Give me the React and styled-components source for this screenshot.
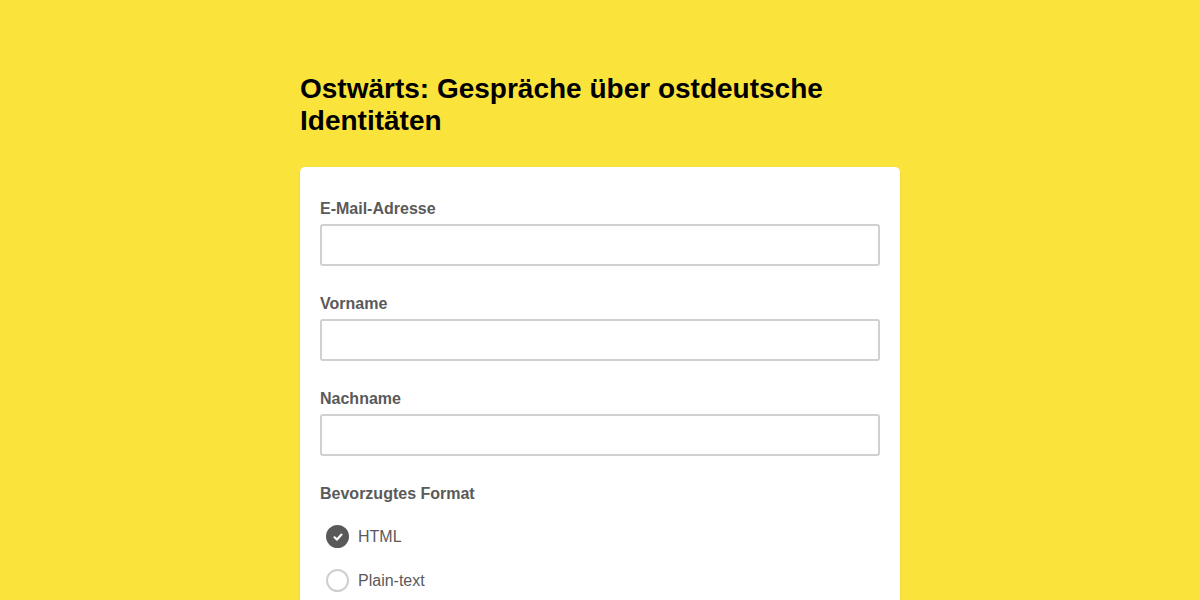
import React from "react";
import styled, { createGlobalStyle } from "styled-components";

const Global = createGlobalStyle`
  html, body { margin: 0; padding: 0; background: #fae43c; }
  body { font-family: "Liberation Sans", Arial, sans-serif; }
  * { box-sizing: border-box; }
`;

const Page = styled.div`
  min-height: 600px;
  display: flex;
  justify-content: center;
  padding-top: 73px;
`;

const Column = styled.div`
  width: 600px;
`;

const Title = styled.h1`
  margin: 0 0 30px;
  font-size: 28px;
  line-height: 32px;
  font-weight: 700;
  color: #000;
`;

const Card = styled.form`
  background: #fff;
  border-radius: 5px;
  padding: 32px 20px 20px;
  box-shadow: 0 1px 3px rgba(0, 0, 0, 0.08);
`;

const Field = styled.div`
  margin-bottom: 28px;
`;

const Label = styled.label`
  display: block;
  font-size: 16px;
  font-weight: 700;
  color: #5a5a5a;
  line-height: 20px;
  margin-bottom: 5px;
`;

const Input = styled.input`
  display: block;
  width: 100%;
  height: 42px;
  border: 2px solid #d0d0d0;
  border-radius: 3px;
  font-size: 16px;
  padding: 0 10px;
  font-family: inherit;
  outline: none;
`;

const Options = styled.div`
  display: flex;
  flex-direction: column;
  gap: 21px;
  padding: 16px 0 0 6px;
`;

const Option = styled.label`
  display: flex;
  align-items: center;
  gap: 9px;
  font-size: 16px;
  line-height: 23px;
  color: #5a5a5a;
  cursor: pointer;
`;

const Circle = styled.span`
  width: 23px;
  height: 23px;
  border-radius: 50%;
  display: flex;
  align-items: center;
  justify-content: center;
  background: ${(p) => (p.$checked ? "#595959" : "#fff")};
  border: 2px solid ${(p) => (p.$checked ? "#595959" : "#cfcfcf")};
`;

const Check = () => (
  <svg width="12" height="12" viewBox="0 0 12 12">
    <path d="M2.5 6.3 L5 8.6 L9.5 3.6" fill="none" stroke="#fff" strokeWidth="2.2" strokeLinecap="round" strokeLinejoin="round" />
  </svg>
);

export default function App() {
  return (
    <>
      <Global />
      <Page>
        <Column>
          <Title>Ostwärts: Gespräche über ostdeutsche Identitäten</Title>
          <Card>
            <Field>
              <Label>E-Mail-Adresse</Label>
              <Input type="email" />
            </Field>
            <Field>
              <Label>Vorname</Label>
              <Input type="text" />
            </Field>
            <Field>
              <Label>Nachname</Label>
              <Input type="text" />
            </Field>
            <Field>
              <Label>Bevorzugtes Format</Label>
              <Options>
                <Option>
                  <Circle $checked><Check /></Circle>
                  HTML
                </Option>
                <Option>
                  <Circle />
                  Plain-text
                </Option>
              </Options>
            </Field>
          </Card>
        </Column>
      </Page>
    </>
  );
}
